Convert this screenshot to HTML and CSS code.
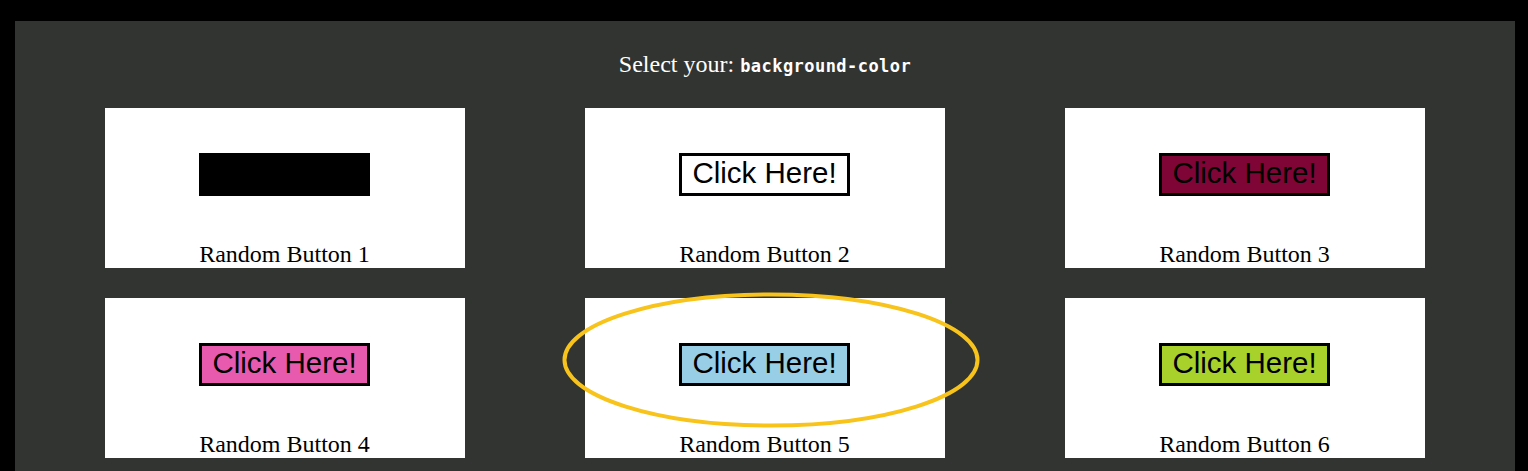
FILE: index.html
```html
<!DOCTYPE html>
<html>
<head>
<meta charset="utf-8">
<link rel="stylesheet" href="styles.css">
</head>
<body>
<main class="panel">
  <h1 class="title">Select your: <code class="prop">background-color</code></h1>
  <div class="grid">
    <div class="card"><button class="btn btn-1">Click Here!</button><span class="label">Random Button 1</span></div>
    <div class="card"><button class="btn btn-2">Click Here!</button><span class="label">Random Button 2</span></div>
    <div class="card"><button class="btn btn-3">Click Here!</button><span class="label">Random Button 3</span></div>
    <div class="card"><button class="btn btn-4">Click Here!</button><span class="label">Random Button 4</span></div>
    <div class="card card-marked"><button class="btn btn-5">Click Here!</button><span class="label">Random Button 5</span>
      <svg class="mark" width="424" height="142" viewBox="0 0 424 142"><ellipse cx="212" cy="71" rx="206.5" ry="65.5" fill="none" stroke="#f8c31b" stroke-width="4"/></svg>
    </div>
    <div class="card"><button class="btn btn-6">Click Here!</button><span class="label">Random Button 6</span></div>
  </div>
</main>
</body>
</html>
```

FILE: styles.css
```css
html, body {
  margin: 0;
  padding: 0;
  background: #000;
}
body {
  height: 471px;
  overflow: hidden;
}
.panel {
  box-sizing: border-box;
  width: 1500px;
  min-height: 450px;
  margin: 21px 0 0 15px;
  padding: 30px 90px 0;
  background: #323431;
}
.title {
  margin: 0 0 30px;
  text-align: center;
  font-family: "Liberation Serif", "Times New Roman", serif;
  font-weight: normal;
  font-size: 24px;
  color: #fff;
  line-height: normal;
}
.prop {
  font-family: "DejaVu Sans Mono", monospace;
  font-weight: bold;
  font-size: 17px;
  letter-spacing: 0.45px;
}
.grid {
  display: grid;
  grid-template-columns: repeat(3, 360px);
  column-gap: 120px;
  row-gap: 30px;
}
.card {
  position: relative;
  height: 160px;
  background: #fff;
  display: flex;
  flex-direction: column;
  align-items: center;
}
.btn {
  box-sizing: border-box;
  width: 171px;
  height: 43px;
  margin-top: 45px;
  margin-right: 1px;
  padding: 0 0 3px;
  border: 3px solid #000;
  border-radius: 0;
  font-family: "Liberation Sans", Arial, sans-serif;
  font-size: 29.5px;
  line-height: 1;
  color: #000;
  background: #fff;
}
.btn-1 { background: #000; }
.btn-2 { background: #fff; }
.btn-3 { background: #7f0536; }
.btn-4 { background: #e85aae; }
.btn-5 { background: #98cfe6; }
.btn-6 { background: #a9d12b; }
.label {
  margin-top: auto;
  margin-bottom: 0;
  margin-right: 1px;
  font-family: "Liberation Serif", "Times New Roman", serif;
  font-size: 24px;
  color: #000;
}
.mark {
  position: absolute;
  left: -26px;
  top: -9px;
  pointer-events: none;
}
```
